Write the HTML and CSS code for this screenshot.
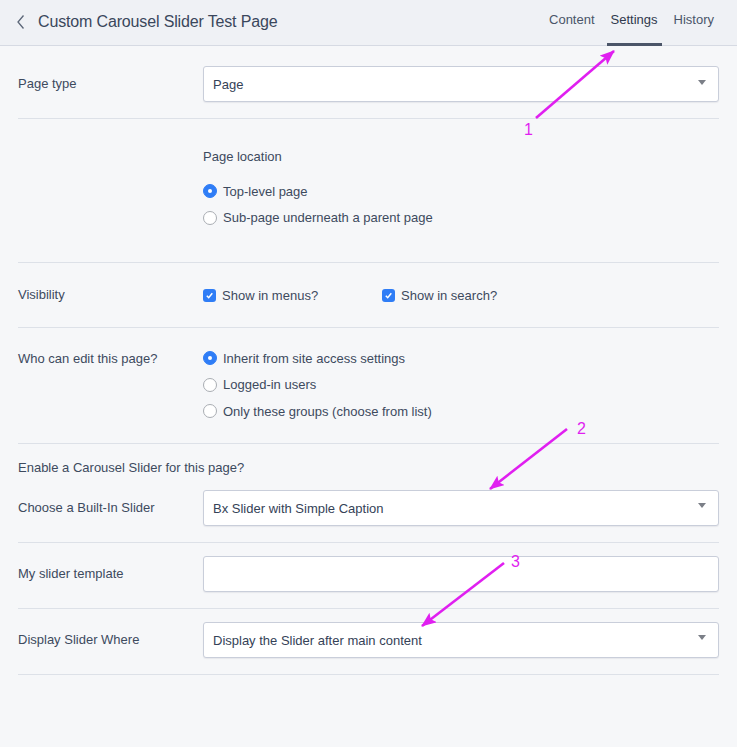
FILE: index.html
```html
<!DOCTYPE html>
<html lang="en">
<head>
<meta charset="utf-8">
<title>Custom Carousel Slider Test Page</title>
<link rel="stylesheet" href="styles.css">
</head>
<body>
<div class="page">
  <header class="topbar">
    <div class="title-wrap">
      <svg class="back" width="10" height="16" viewBox="0 0 10 16"><path d="M7.5 1.5 L2 8 L7.5 14.5" fill="none" stroke="#5b6678" stroke-width="1.3"/></svg>
      <h1 class="title">Custom Carousel Slider Test Page</h1>
    </div>
    <nav class="tabs">
      <span class="tab">Content</span>
      <span class="tab active">Settings</span>
      <span class="tab">History</span>
    </nav>
  </header>

  <main class="form">
    <div class="row row-first">
      <div class="label">Page type</div>
      <div class="select"><span>Page</span><i class="caret"></i></div>
    </div>

    <div class="row row-stack">
      <div class="label"></div>
      <div class="group group-location">
        <div class="group-title">Page location</div>
        <div class="opt"><span class="radio on"></span>Top-level page</div>
        <div class="opt"><span class="radio"></span>Sub-page underneath a parent page</div>
      </div>
    </div>

    <div class="row row-check">
      <div class="label">Visibility</div>
      <div class="checks">
        <div class="opt chk-first"><span class="check"><svg width="9" height="9" viewBox="0 0 9 9"><path d="M1.8 4.8 L3.7 6.7 L7.3 2.3" fill="none" stroke="#fff" stroke-width="1.5"/></svg></span>Show in menus?</div>
        <div class="opt"><span class="check"><svg width="9" height="9" viewBox="0 0 9 9"><path d="M1.8 4.8 L3.7 6.7 L7.3 2.3" fill="none" stroke="#fff" stroke-width="1.5"/></svg></span>Show in search?</div>
      </div>
    </div>

    <div class="row row-stack">
      <div class="label label-top">Who can edit this page?</div>
      <div class="group group-edit">
        <div class="opt"><span class="radio on"></span>Inherit from site access settings</div>
        <div class="opt"><span class="radio"></span>Logged-in users</div>
        <div class="opt"><span class="radio"></span>Only these groups (choose from list)</div>
      </div>
    </div>

    <div class="row row-block">
      <div class="block-title">Enable a Carousel Slider for this page?</div>
      <div class="inner">
        <div class="label">Choose a Built-In Slider</div>
        <div class="select"><span>Bx Slider with Simple Caption</span><i class="caret"></i></div>
      </div>
    </div>

    <div class="row">
      <div class="label">My slider template</div>
      <div class="input"></div>
    </div>

    <div class="row">
      <div class="label">Display Slider Where</div>
      <div class="select"><span>Display the Slider after main content</span><i class="caret"></i></div>
    </div>
  </main>

  <svg class="annot" width="737" height="747" viewBox="0 0 737 747">
    <defs>
      <marker id="ah" markerUnits="userSpaceOnUse" markerWidth="16" markerHeight="14" refX="14" refY="6" orient="auto">
        <path d="M0 0 L15 6 L0 12 L3 6 Z" fill="#e01ff0"/>
      </marker>
    </defs>
    <line x1="536" y1="118" x2="614" y2="51" stroke="#e01ff0" stroke-width="2.6" marker-end="url(#ah)"/>
    <line x1="567" y1="429" x2="490" y2="489" stroke="#e01ff0" stroke-width="2.6" marker-end="url(#ah)"/>
    <line x1="504" y1="563" x2="422" y2="626" stroke="#e01ff0" stroke-width="2.6" marker-end="url(#ah)"/>
    <text class="num" x="524" y="135">1</text>
    <text class="num" x="577" y="434">2</text>
    <text class="num" x="511" y="567">3</text>
  </svg>
</div>
</body>
</html>
```

FILE: styles.css
```css
* { box-sizing: border-box; }
html, body { margin: 0; padding: 0; }
body {
  background: #f6f7f9;
  font-family: "Liberation Sans", Arial, sans-serif;
  font-size: 13px;
  color: #3d4a5e;
  width: 737px;
  height: 747px;
  overflow: hidden;
}
.page { position: relative; width: 737px; height: 747px; }

.topbar {
  height: 46px;
  background: #eff1f5;
  border-bottom: 1px solid #d6dae3;
  display: flex;
  align-items: center;
  justify-content: space-between;
  padding: 0 23px 0 16px;
}
.title-wrap { display: flex; align-items: center; gap: 12px; padding-bottom: 2px; }
.back { display: block; }
.title {
  margin: 0;
  font-size: 16px;
  font-weight: normal;
  color: #3a475c;
  letter-spacing: -0.15px;
}
.tabs { display: flex; height: 45px; gap: 16px; }
.tab {
  display: flex;
  align-items: center;
  height: 100%;
  padding-bottom: 6px;
  color: #4a5569;
  position: relative;
}
.tab.active { color: #2f3a4d; }
.tab.active::after {
  content: "";
  position: absolute;
  left: -4px;
  right: -4px;
  bottom: -1px;
  height: 3px;
  background: #4b5568;
}

.form { margin: 0 18px; padding-top: 7px; }
.row {
  display: grid;
  grid-template-columns: 185px 516px;
  align-items: center;
  padding: 13px 0 16px;
  border-bottom: 1px solid #dde1e8;
}
.label { line-height: 18px; }

.select, .input {
  height: 36px;
  background: #fff;
  border: 1px solid #c9ceda;
  border-radius: 3px;
  box-shadow: 0 1px 1px rgba(60, 70, 90, 0.08);
  display: flex;
  align-items: center;
  justify-content: space-between;
  padding: 0 12px 0 9px;
  color: #354257;
}
.select span { padding-top: 1px; }
.caret {
  width: 0; height: 0;
  border-left: 4px solid transparent;
  border-right: 4px solid transparent;
  border-top: 5px solid #7b7f87;
  margin-top: -4px;
}

.row-stack { align-items: start; }
.group { display: flex; flex-direction: column; }
.group-location { padding-top: 16px; padding-bottom: 15px; }
.group-title { line-height: 18px; margin-bottom: 12px; }
.opt {
  display: flex;
  align-items: center;
  height: 26.5px;
  color: #3d4a5e;
}
.group-edit { padding-top: 4px; padding-bottom: 2px; }
.label-top { padding-top: 9px; }

.radio {
  width: 14px; height: 14px;
  border-radius: 50%;
  border: 1px solid #a9adb3;
  background: #fff;
  margin-right: 6px;
  flex: none;
  position: relative;
}
.radio.on {
  background: #2f7df6;
  border-color: #2f7df6;
}
.radio.on::after {
  content: "";
  position: absolute;
  width: 4px; height: 4px;
  background: #fff;
  border-radius: 50%;
  left: 4px; top: 4px;
}

.row-check { padding-top: 15px; padding-bottom: 15px; }
.checks { display: flex; height: 34px; align-items: center; }
.chk-first { width: 179px; }
.check {
  width: 13px; height: 13px;
  border-radius: 3px;
  background: #2f7df6;
  margin-right: 6px;
  display: flex;
  align-items: center;
  justify-content: center;
  flex: none;
}
.check svg { display: block; }

.row-block { display: block; padding-top: 15px; }
.block-title { line-height: 18px; margin-bottom: 13px; }
.inner {
  display: grid;
  grid-template-columns: 185px 516px;
  align-items: center;
}

.annot { position: absolute; left: 0; top: 0; pointer-events: none; }
.num {
  font-family: "Liberation Sans", Arial, sans-serif;
  font-size: 16px;
  fill: #e01ff0;
}
```
